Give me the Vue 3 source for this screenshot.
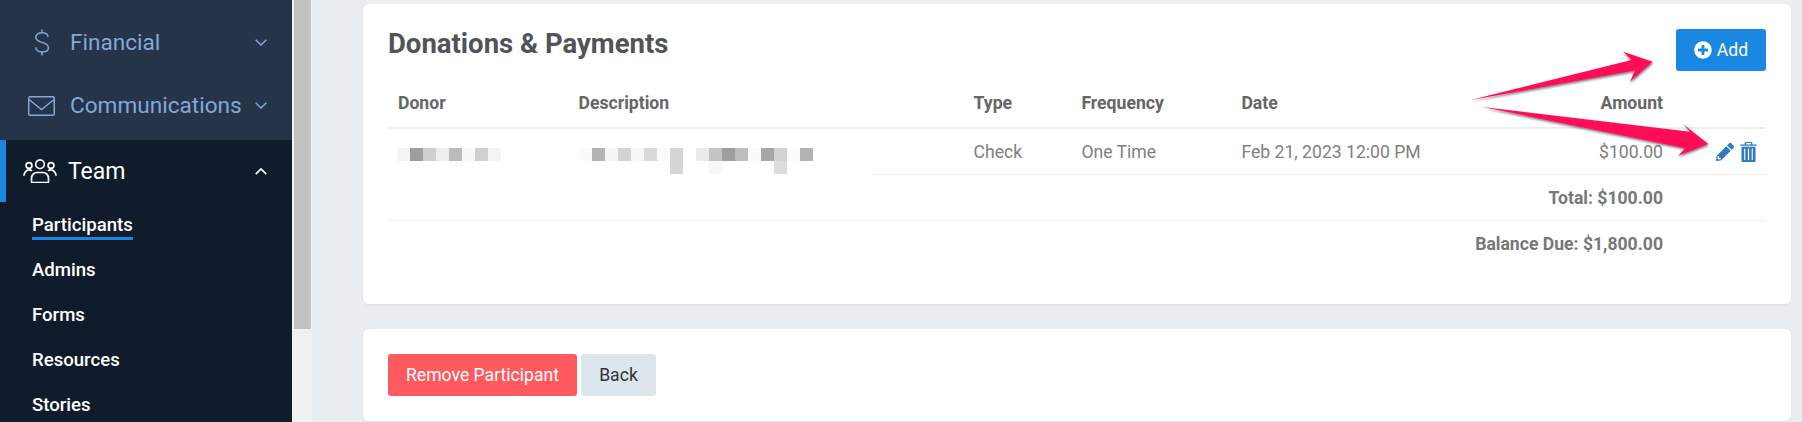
<template>
  <div class="page">
    <aside class="sidebar">
      <div class="menu-top">
        <a v-for="item in topMenu" :key="item.label" class="menu-item">
          <span class="menu-icon">
            <svg v-if="item.icon === 'dollar'" width="16" height="27" viewBox="0 0 16 27" fill="none" stroke="currentColor" stroke-width="1.5">
              <path d="M14 8C14 5.500 11.800 3.800 8 3.800S1.800 5.600 1.800 8.300 4.300 12.400 8 13.400s6.400 2.400 6.400 5.300S11.800 23 8 23 1.600 21 1.600 18.300" />
              <path d="M8 .5v3.300M8 23v3.500" />
            </svg>
            <svg v-else width="27" height="20" viewBox="0 0 27 20" fill="none" stroke="currentColor" stroke-width="1.5">
              <rect x=".75" y=".75" width="25.500" height="18.500" rx="1.500" />
              <path d="M1 3.500l12.500 10L26 3.500" />
            </svg>
          </span>
          <span class="menu-label">{{ item.label }}</span>
          <svg class="chevron" width="12" height="7" viewBox="0 0 12 7" fill="none" stroke="currentColor" stroke-width="1.5">
            <path d="M.7.8L6 6l5.300-5.200" />
          </svg>
        </a>
      </div>
      <div class="menu-active">
        <a class="team-item">
          <svg class="team-icon" width="34" height="24" viewBox="0 0 34 24" fill="none" stroke="currentColor" stroke-width="1.7">
            <circle cx="17" cy="5.200" r="4.300" />
            <circle cx="6" cy="6.500" r="2.900" />
            <circle cx="28" cy="6.500" r="2.900" />
            <path d="M8.500 22.500v-3c0-3.500 2.500-6 5.500-6h6c3 0 5.500 2.500 5.500 6v3c0 .7-.5 1.200-1.200 1.200H9.700c-.7 0-1.200-.5-1.200-1.200z" />
            <path d="M9 12c-.8-.8-1.700-1.200-2.800-1.200C3.500 10.800 1 13.500.9 16.800M25 12c.8-.8 1.700-1.200 2.800-1.200 2.700 0 5.200 2.700 5.300 6" />
          </svg>
          <span class="team-label">Team</span>
          <svg class="chevron" width="12" height="7" viewBox="0 0 12 7" fill="none" stroke="currentColor" stroke-width="1.700">
            <path d="M.7 6.200L6 1l5.300 5.200" />
          </svg>
        </a>
        <a v-for="(link, i) in subMenu" :key="link" class="sub-item">
          <span :class="{ current: i === 0 }">{{ link }}</span>
        </a>
      </div>
    </aside>

    <div class="scrollbar"><div class="thumb"></div></div>

    <main class="content">
      <section class="card payments">
        <div class="card-head">
          <h2>Donations &amp; Payments</h2>
          <button class="btn btn-primary">
            <svg width="18" height="18" viewBox="0 0 512 512" fill="currentColor">
              <path d="M256 8C119 8 8 119 8 256s111 248 248 248 248-111 248-248S393 8 256 8zm144 276c0 6.600-5.400 12-12 12h-92v92c0 6.600-5.400 12-12 12h-56c-6.600 0-12-5.400-12-12v-92h-92c-6.600 0-12-5.400-12-12v-56c0-6.600 5.400-12 12-12h92v-92c0-6.600 5.400-12 12-12h56c6.600 0 12 5.400 12 12v92h92c6.600 0 12 5.400 12 12v56z" />
            </svg>
            Add
          </button>
        </div>
        <table>
          <colgroup>
            <col class="c-donor" />
            <col class="c-desc" />
            <col class="c-type" />
            <col class="c-freq" />
            <col class="c-date" />
            <col class="c-amount" />
            <col class="c-actions" />
          </colgroup>
          <thead>
            <tr>
              <th>Donor</th>
              <th>Description</th>
              <th>Type</th>
              <th>Frequency</th>
              <th>Date</th>
              <th class="right">Amount</th>
              <th></th>
            </tr>
          </thead>
          <tbody>
            <tr>
              <td colspan="2" class="blurred">
                <svg class="mosaic" width="484" height="46" viewBox="0 0 484 46" aria-hidden="true">
                  <rect v-for="(c, i) in mosaic" :key="i" :x="c.x" :y="c.y" width="13" height="13" :fill="c.fill" />
                </svg>
              </td>
              <td>Check</td>
              <td>One Time</td>
              <td>Feb 21, 2023 12:00 PM</td>
              <td class="right">$100.00</td>
              <td class="actions">
                <svg class="edit-icon" width="18" height="18" viewBox="0 0 512 512" fill="currentColor">
                  <path d="M497.900 142.100l-46.100 46.100c-4.700 4.700-12.300 4.700-17 0l-111-111c-4.700-4.700-4.700-12.300 0-17l46.100-46.100c18.700-18.700 49.100-18.700 67.900 0l60.100 60.100c18.800 18.700 18.800 49.100 0 67.900zM284.200 99.800L21.600 362.400.4 483.900c-2.900 16.400 11.400 30.600 27.800 27.800l121.500-21.300 262.600-262.600c4.700-4.700 4.700-12.300 0-17l-111-111c-4.800-4.700-12.400-4.700-17.100 0zM88 424h48v36.300l-64.500 11.300-31.100-31.100L51.700 376H88v48z" />
                </svg>
                <svg class="trash-icon" width="17" height="20" viewBox="0 0 17 20" fill="currentColor">
                  <path d="M6 0h5c.8 0 1.400.6 1.400 1.400v1.100H16.400c.4 0 .6.300.6.600s-.2.600-.6.600H.6C.2 3.700 0 3.400 0 3.100s.2-.6.600-.6h4V1.400C4.600.6 5.200 0 6 0zm0 1.100v1.400h5V1.100H6z" />
                  <path fill-rule="evenodd" d="M1.500 4.700h14v14c0 .8-.5 1.300-1.300 1.300H2.800c-.8 0-1.300-.5-1.300-1.300v-14zM4.200 6.500v11.500h1.100V6.500H4.200zm3.700 0v11.500h1.200V6.500H7.900zm3.800 0v11.500h1.100V6.500h-1.100z" />
                </svg>
              </td>
            </tr>
            <tr class="summary">
              <td colspan="6" class="right">Total: $100.00</td>
              <td></td>
            </tr>
            <tr class="summary last">
              <td colspan="6" class="right">Balance Due: $1,800.00</td>
              <td></td>
            </tr>
          </tbody>
        </table>
      </section>

      <section class="card footer-card">
        <button class="btn btn-danger">Remove Participant</button>
        <button class="btn btn-light">Back</button>
      </section>
    </main>

    <svg class="arrows" width="1802" height="422" viewBox="0 0 1802 422" aria-hidden="true">
      <defs>
        <filter id="arrow-shadow" x="-10%" y="-30%" width="120%" height="170%">
          <feDropShadow dx="0.500" dy="1.500" stdDeviation="1.200" flood-color="#000" flood-opacity="0.550" />
        </filter>
      </defs>
      <g fill="#ff0f57" filter="url(#arrow-shadow)">
        <polygon points="1470.700,100 1631.500,60 1623.300,51.700 1652.700,61.700 1630,81.700 1635,70.500" />
        <polygon points="1482.700,107 1690,131.700 1683.300,124.300 1708.300,144 1678.300,155.700 1685,148.300" />
      </g>
    </svg>
  </div>
</template>

<script setup>
const topMenu = [
  { label: 'Financial', icon: 'dollar' },
  { label: 'Communications', icon: 'mail' }
]

const subMenu = ['Participants', 'Admins', 'Forms', 'Resources', 'Stories']

// pixelated donor / description names, column index + grey value
const CELL = 13
const donorCells = ['f4', '9e', 'cf', 'ee', 'bb', 'f8', 'd0', 'f3']
const descCells = ['fb', 'b4', 'f5', 'd2', 'f8', 'da', 'fa', 'd6', 'ff', 'eb', 'c4', '9e', 'bd', 'fb', 'a6', 'd2', 'fc', 'b4']
const descLower = { 7: 'd6', 10: 'f7', 15: 'dc' }

const grey = (v) => `#${v}${v}${v}`

const mosaic = [
  ...donorCells.map((v, i) => ({ x: 9 + i * CELL, y: 19, fill: grey(v) })),
  ...descCells.map((v, i) => ({ x: 191 + i * CELL, y: 19, fill: grey(v) })),
  ...Object.entries(descLower).map(([i, v]) => ({ x: 191 + i * CELL, y: 32, fill: grey(v) }))
]
</script>

<style>
html,
body {
  margin: 0;
  overflow: hidden;
  background: #ebeef1;
}
</style>

<style scoped>
.page {
  position: relative;
  display: flex;
  width: 1802px;
  height: 422px;
  overflow: hidden;
  font-family: Roboto, "Liberation Sans", sans-serif;
  font-size: 17.6px;
  color: #808080;
  background: #ebeef1;
}

.sidebar {
  flex: none;
  width: 292px;
  height: 422px;
  overflow: hidden;
  background: #101c2c;
}

.menu-top {
  height: 140px;
  box-sizing: border-box;
  padding-top: 11px;
  background: #253449;
  color: #84a8d6;
}

.menu-item {
  display: flex;
  align-items: center;
  height: 63px;
  padding-right: 25px;
}

.menu-icon {
  display: flex;
  justify-content: center;
  flex: none;
  width: 27px;
  margin: 0 15px 0 28px;
}

.menu-label {
  flex: 1;
  font-size: 22.6px;
}

.chevron {
  flex: none;
}

.team-item {
  display: flex;
  align-items: center;
  height: 62px;
  box-sizing: border-box;
  padding-right: 25px;
  border-left: 6px solid #1a88e2;
  color: #fff;
}

.team-icon {
  flex: none;
  margin: 0 11px 0 17px;
}

.team-label {
  flex: 1;
  font-size: 23px;
}

.sub-item {
  display: flex;
  align-items: center;
  height: 45px;
  padding-left: 32px;
  color: #fff;
  font-size: 18.6px;
  font-weight: 500;
}

.sub-item .current {
  padding-bottom: 1px;
  border-bottom: 3px solid #1a88e2;
  margin-bottom: -4px;
}

.scrollbar {
  flex: none;
  width: 20px;
  height: 422px;
  box-sizing: border-box;
  padding-left: 2px;
  background: #f1f1f1;
}

.thumb {
  width: 17px;
  height: 329px;
  background: #c1c1c1;
}

.content {
  flex: 1;
  min-width: 0;
  padding: 4px 11px 0 51px;
}

.card {
  box-sizing: border-box;
  background: #fff;
  border-radius: 6px;
  box-shadow: 0 1px 3px rgba(40, 50, 70, 0.08);
}

.payments {
  height: 300px;
  padding: 25px;
}

.card-head {
  display: flex;
  justify-content: space-between;
  align-items: flex-start;
  height: 42px;
  margin-bottom: 8px;
}

h2 {
  margin: 0;
  font-size: 27.5px;
  font-weight: 700;
  line-height: 30px;
  color: #505459;
}

.btn {
  display: inline-flex;
  align-items: center;
  justify-content: center;
  height: 42px;
  box-sizing: border-box;
  border: 0;
  border-radius: 3px;
  font-family: inherit;
  font-size: 17.6px;
}

.btn-primary {
  gap: 5px;
  width: 90px;
  background: #1a88e2;
  color: #fff;
}

.btn-danger {
  width: 189px;
  background: #ff5a5f;
  color: #fff;
}

.btn-light {
  width: 75px;
  margin-left: 4px;
  background: #dee6ed;
  color: #333;
}

table {
  width: 1378px;
  table-layout: fixed;
  border-collapse: separate;
  border-spacing: 0;
}

.c-donor { width: 180.6px; }
.c-desc { width: 395px; }
.c-type { width: 107.8px; }
.c-freq { width: 160px; }
.c-date { width: 300px; }
.c-amount { width: 141.6px; }
.c-actions { width: 93px; }

th {
  height: 48px;
  padding: 0 10px;
  border-bottom: 2px solid #eceef2;
  text-align: left;
  font-weight: 700;
  color: #666;
}

td {
  height: 45px;
  padding: 0 10px;
  border-bottom: 1px solid #eceef0;
}

th.right,
td.right {
  text-align: right;
}

.blurred {
  position: relative;
}

.mosaic {
  position: absolute;
  left: 0;
  top: 0;
  background: #fff;
}

.actions {
  color: #2f7bbd;
  padding: 0;
  text-align: right;
  white-space: nowrap;
}

.actions svg {
  vertical-align: middle;
}

.edit-icon {
  margin-right: 6px;
}

.trash-icon {
  margin-right: 9px;
}

.summary td {
  font-weight: 700;
  color: #777;
}

.summary.last td {
  border-bottom: 0;
}

.footer-card {
  display: flex;
  height: 92px;
  margin-top: 25px;
  padding: 25px;
}

.arrows {
  position: absolute;
  left: 0;
  top: 0;
  pointer-events: none;
}
</style>
